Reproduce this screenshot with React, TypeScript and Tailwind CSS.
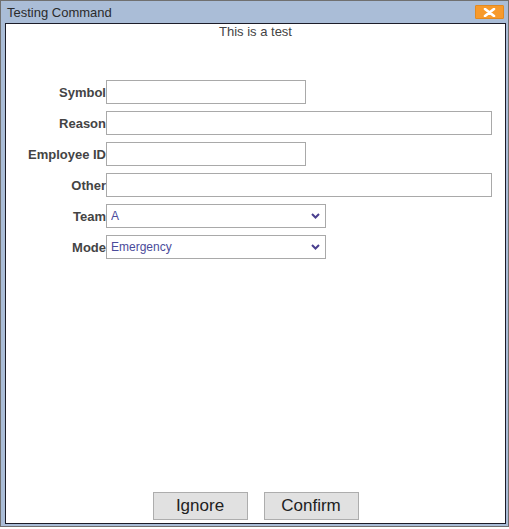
import React from "react";

const labelCls = "w-[100px] shrink-0 text-right text-[13px] font-bold text-[#444] leading-[25px]";
const inputCls = "h-[24px] border border-[#a9a9a9] bg-white px-1 text-[13px] outline-none";

function Chevron() {
    return (
        <svg className="pointer-events-none absolute right-[6px] top-[9px]" width="9" height="6" viewBox="0 0 9 6">
            <path d="M1 1l3.5 3.5L8 1" fill="none" stroke="#4a3f8f" strokeWidth="2" />
        </svg>
    );
}

function SelectBox({ value }: { value: string }) {
    return (
        <div className="relative flex h-[24px] w-[220px]">
            <select
                defaultValue={value}
                className="block h-[24px] w-full appearance-none border border-[#a9a9a9] bg-white pl-[4px] text-[12px] leading-[22px] text-[#4b4b9b] outline-none"
            >
                <option>{value}</option>
            </select>
            <Chevron />
        </div>
    );
}

export default function App() {
    return (
        <div className="h-[529px] w-[509px] bg-white" style={{ fontFamily: '"Liberation Sans", Arial, sans-serif' }}>
            <div className="flex h-[527px] w-[509px] flex-col border border-[#707070] bg-[#aabdd7]">
                {/* Title bar */}
                <div className="flex h-[22px] shrink-0 items-center justify-between pl-[6px] pr-[4px]">
                    <span className="text-[13px] leading-none text-[#2b2b2b]">Testing Command</span>
                    <div className="flex h-[14px] w-[29px] items-center justify-center rounded-[1px] bg-[#f79a2c] border border-[#e38a20]">
                        <svg width="13" height="9" viewBox="0 0 13 9">
                            <path d="M2 1l9 7M11 1l-9 7" stroke="#fff" strokeWidth="2.6" strokeLinecap="round" />
                        </svg>
                    </div>
                </div>

                {/* Body */}
                <div className="mb-[2px] ml-[4px] mr-[2px] flex flex-1 flex-col border border-[#1c1c28] bg-white">
                    <p className="text-center text-[13px] leading-[15px] text-[#444]">This is a test</p>

                    <div className="mt-[41px] flex flex-col gap-[7px]">
                        <div className="flex h-[24px]">
                            <label className={labelCls}>Symbol</label>
                            <input className={`${inputCls} w-[200px]`} />
                        </div>
                        <div className="flex h-[24px]">
                            <label className={labelCls}>Reason</label>
                            <input className={`${inputCls} w-[386px]`} />
                        </div>
                        <div className="flex h-[24px]">
                            <label className={labelCls}>Employee ID</label>
                            <input className={`${inputCls} w-[200px]`} />
                        </div>
                        <div className="flex h-[24px]">
                            <label className={labelCls}>Other</label>
                            <input className={`${inputCls} w-[386px]`} />
                        </div>
                        <div className="flex h-[24px]">
                            <label className={labelCls}>Team</label>
                            <SelectBox value="A" />
                        </div>
                        <div className="flex h-[24px]">
                            <label className={labelCls}>Mode</label>
                            <SelectBox value="Emergency" />
                        </div>
                    </div>

                    <div className="mt-auto mb-[3px] flex justify-center gap-[16px]">
                        <button className="h-[28px] w-[95px] border border-[#adadad] bg-[#e1e1e1] text-[17px] text-[#222]">Ignore</button>
                        <button className="h-[28px] w-[95px] border border-[#adadad] bg-[#e1e1e1] text-[17px] text-[#222]">Confirm</button>
                    </div>
                </div>
            </div>
        </div>
    );
}
